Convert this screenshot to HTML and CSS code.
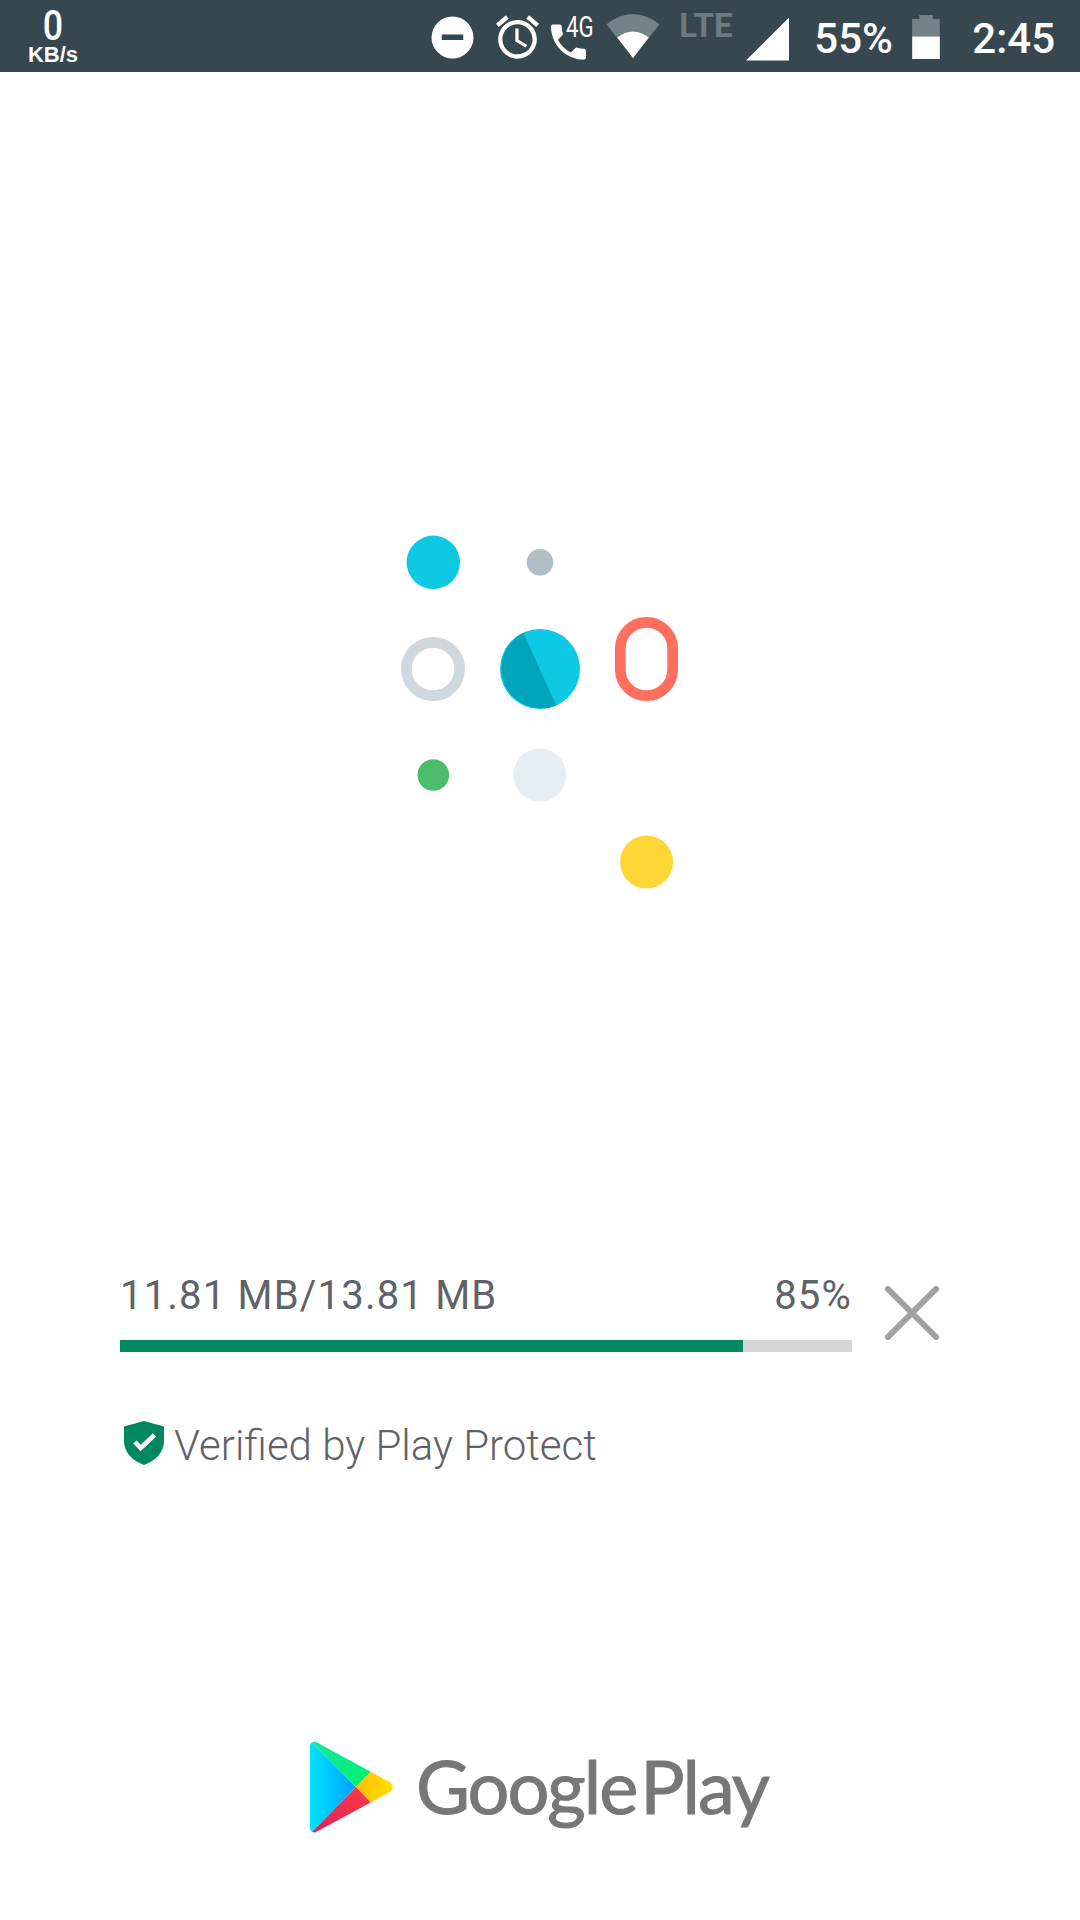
FILE: index.html
```html
<!DOCTYPE html>
<html lang="en">
<head>
<meta charset="utf-8">
<title>Google Play</title>
<link rel="stylesheet" href="styles.css">
</head>
<body>
<div class="screen">
  <header class="status">
    <div class="speed"><span class="speed-num">0</span><span class="speed-unit">KB/s</span></div>
    <div class="status-right">
      <svg class="ic-dnd" viewBox="0 0 42 42"><path class="fill-white" fill-rule="evenodd" d="M21 0.500a20.500 20.500 0 1 0 0 41a20.500 20.500 0 1 0 0-41zM10.500 18h21v5.500h-21z"/></svg>
      <svg class="ic-alarm" viewBox="2 1.86 20 20.14"><path class="fill-white" d="M22 5.720l-4.600-3.860-1.290 1.530 4.600 3.860L22 5.720zM7.880 3.390L6.600 1.860 2 5.710l1.290 1.530 4.590-3.850zM12.500 8H11v6l4.750 2.850.75-1.230-4-2.370V8zM12 4c-4.970 0-9 4.030-9 9s4.020 9 9 9c4.970 0 9-4.030 9-9s-4.030-9-9-9zm0 16c-3.870 0-7-3.130-7-7s3.130-7 7-7 7 3.130 7 7-3.130 7-7 7z"/></svg>
      <div class="call">
        <svg class="ic-phone" viewBox="3 3 18 18"><path class="fill-white" d="M6.620 10.790c1.440 2.830 3.760 5.140 6.590 6.590l2.200-2.200c.27-.27.67-.36 1.020-.24 1.120.37 2.330.57 3.570.57.55 0 1 .45 1 1V20c0 .55-.45 1-1 1-9.390 0-17-7.610-17-17 0-.55.45-1 1-1h3.500c.55 0 1 .45 1 1 0 1.250.2 2.450.57 3.570.11.35.03.74-.25 1.020l-2.200 2.200z"/></svg>
        <span class="call-4g">4G</span>
      </div>
      <svg class="ic-wifi" viewBox="604 14 53 43"><path class="fill-dim" d="M604.500 24Q630.500 4 656.500 24L630.500 57Z"/><path class="fill-white" d="M615 37Q630.500 25 646 37L630.500 57Z"/></svg>
      <span class="lte">LTE</span>
      <svg class="ic-signal" viewBox="0 0 42 42"><path class="fill-white" d="M42 0V42H0Z"/></svg>
      <span class="pct">55%</span>
      <svg class="ic-batt" viewBox="0 0 27 43"><path class="fill-dim" d="M7 0h13v4h7v17H0V4h7z"/><path class="fill-white" d="M0 21h27v22H0z"/></svg>
      <span class="clock">2:45</span>
    </div>
  </header>

  <svg class="dots" viewBox="400 530 290 370">
    <circle class="c-cyan" cx="433.300" cy="562.300" r="26.700"/>
    <circle class="c-slate" cx="540" cy="562.300" r="13.300"/>
    <circle class="c-ring" cx="433" cy="669" r="26.700"/>
    <circle class="c-cyan" cx="540" cy="669" r="40"/>
    <path class="c-teal" d="M523.300 632.700A40 40 0 0 0 556.300 705.500Z"/>
    <rect class="c-pill" x="620.300" y="622.300" width="52.400" height="73.400" rx="26.200"/>
    <circle class="c-green" cx="433.300" cy="775" r="15.800"/>
    <circle class="c-pale" cx="539.800" cy="775" r="26.500"/>
    <circle class="c-yellow" cx="646.600" cy="862" r="26.500"/>
  </svg>

  <section class="download">
    <div class="progress-col">
      <div class="progress-text"><span>11.81 MB/13.81 MB</span><span>85%</span></div>
      <div class="track"><div class="bar" style="width:85.100%"></div></div>
    </div>
    <svg class="ic-close" viewBox="0 0 54 54"><path class="close-line" d="M3 3L51 51M51 3L3 51"/></svg>
  </section>

  <div class="protect">
    <svg class="ic-shield" viewBox="124 1421 40 44"><path class="fill-green" d="M144 1421L164 1426.500V1441C164 1453 155 1461 144 1465C133 1461 124 1453 124 1441V1426.500Z"/><path class="check" d="M135 1442L140.700 1448L154.500 1435"/></svg>
    <span class="protect-label">Verified by Play Protect</span>
  </div>

  <footer class="brand">
    <svg class="ic-play" viewBox="310 1741 83 92">
      <defs>
        <linearGradient id="gb" x1="0" y1="0" x2="1" y2="0"><stop offset="0" stop-color="#00e2ff"/><stop offset="1" stop-color="#00a0ff"/></linearGradient>
        <linearGradient id="gg" x1="0" y1="0" x2="1" y2="0.300"><stop offset="0" stop-color="#1be3a0"/><stop offset="1" stop-color="#00f076"/></linearGradient>
        <linearGradient id="gy" x1="0" y1="0" x2="1" y2="0"><stop offset="0" stop-color="#ffbd00"/><stop offset="1" stop-color="#ffe000"/></linearGradient>
        <linearGradient id="gr" x1="1" y1="0" x2="0" y2="1"><stop offset="0" stop-color="#ff3a44"/><stop offset="1" stop-color="#d9245f"/></linearGradient>
      </defs>
      <path fill="url(#gb)" d="M312 1742.500Q310 1743.500 310 1746V1828Q310 1830.500 312 1832L356 1787Z"/>
      <path fill="url(#gg)" d="M312 1742.500Q314.500 1741 317 1742.500L370.700 1771.700L356 1787Z"/>
      <path fill="url(#gy)" d="M370.700 1771.700L390.500 1782.500Q395 1787 390.500 1791.500L370.700 1802.500L356 1787Z"/>
      <path fill="url(#gr)" d="M356 1787L370.700 1802.500L317 1831.500Q314.500 1833 312 1832Z"/>
    </svg>
    <span class="brand-name">Google Play</span>
  </footer>
</div>
</body>
</html>
```

FILE: styles.css
```css
* { box-sizing: border-box; }
html, body { margin: 0; padding: 0; background: #fff; }
svg { display: block; flex: none; }

.screen {
  width: 1080px;
  height: 1920px;
  overflow: hidden;
  display: flex;
  flex-direction: column;
  font-family: Roboto, "Liberation Sans", sans-serif;
}

/* status bar */
.status {
  height: 72px;
  flex: none;
  background: #37474f;
  color: #fff;
  display: flex;
  justify-content: space-between;
  align-items: flex-start;
}
.speed {
  width: 106px;
  display: flex;
  flex-direction: column;
  align-items: center;
}
.speed-num {
  font-size: 42px;
  font-weight: 500;
  line-height: 30px;
  margin-top: 11px;
  transform: scaleX(0.85);
}
.speed-unit {
  font-family: "Liberation Sans", sans-serif;
  font-weight: 700;
  font-size: 22px;
  line-height: 18px;
  margin-top: 5px;
}
.status-right { display: flex; align-items: flex-start; padding-right: 25px; }
.fill-white { fill: #fff; }
.fill-dim { fill: #74838a; }
.ic-dnd { width: 43px; height: 43px; margin-top: 16px; }
.ic-alarm { width: 43px; height: 44px; margin-top: 15px; margin-left: 22px; }
.call { position: relative; width: 44px; height: 60px; margin-left: 12px; }
.ic-phone { width: 35px; height: 36px; margin-top: 24px; }
.call-4g {
  position: absolute;
  left: 15px;
  top: 12px;
  font-size: 30px;
  line-height: 30px;
  transform: scaleX(0.74);
  transform-origin: left center;
}
.ic-wifi { width: 54px; height: 44px; margin-top: 14px; margin-left: 11px; }
.lte {
  font-size: 33px;
  font-weight: 700;
  line-height: 30px;
  margin-top: 11px;
  margin-left: 19px;
  color: #6d7b82;
  width: 52px;
}
.ic-signal { width: 43px; height: 44px; margin-top: 17px; margin-left: 15px; }
.pct { font-size: 42px; font-weight: 500; line-height: 44px; margin-top: 17px; margin-left: 25px; width: 76px; }
.ic-batt { width: 28px; height: 44px; margin-top: 15px; margin-left: 22px; }
.clock { font-size: 42px; font-weight: 500; line-height: 44px; margin-top: 17px; margin-left: 32px; }

/* loading dots */
.dots { width: 290px; height: 370px; margin-top: 458px; margin-left: 400px; }
.c-cyan { fill: #0dc9e3; }
.c-teal { fill: #00a5bc; }
.c-slate { fill: #b0bec5; }
.c-ring { fill: none; stroke: #cfd8dc; stroke-width: 10.700px; }
.c-pill { fill: none; stroke: #ff6f5e; stroke-width: 10.700px; }
.c-green { fill: #4fbb6c; }
.c-pale { fill: #e6eef1; }
.c-yellow { fill: #fed636; }

/* download progress */
.download { display: flex; align-items: flex-start; margin-top: 371px; margin-left: 120px; }
.progress-col { width: 732px; }
.progress-text {
  display: flex;
  justify-content: space-between;
  font-size: 40px;
  line-height: 50px;
  letter-spacing: 1.2px;
  color: #5f6368;
}
.track { height: 12px; margin-top: 19px; background: #d5d6d8; }
.bar { height: 12px; background: #01875f; }
.ic-close { width: 54px; height: 54px; margin-left: 33px; margin-top: 15px; }
.close-line { fill: none; stroke: #a0a1a3; stroke-width: 6px; stroke-linecap: square; }

.protect {
  display: flex;
  align-items: flex-start;
  height: 56px;
  margin-top: 63px;
  margin-left: 124px;
  font-size: 42px;
  font-weight: 300;
  line-height: 56px;
  color: #5f6368;
}
.protect-label { margin-top: 3px; }
.ic-shield { width: 40px; height: 44px; margin-top: 6px; margin-right: 10px; }
.fill-green { fill: #01875f; }
.check { fill: none; stroke: #fff; stroke-width: 4.500px; }

/* footer logo */
.brand { display: flex; align-items: center; margin-top: 269px; margin-left: 310px; }
.ic-play { width: 83px; height: 92px; }
.brand-name {
  font-family: Lato, "Open Sans", sans-serif;
  font-size: 74px;
  font-weight: 400;
  line-height: 92px;
  letter-spacing: -2px;
  word-spacing: -13px;
  color: #777;
  margin-left: 23px;
  margin-bottom: 2px;
  -webkit-text-stroke: 1px #777;
}
```
